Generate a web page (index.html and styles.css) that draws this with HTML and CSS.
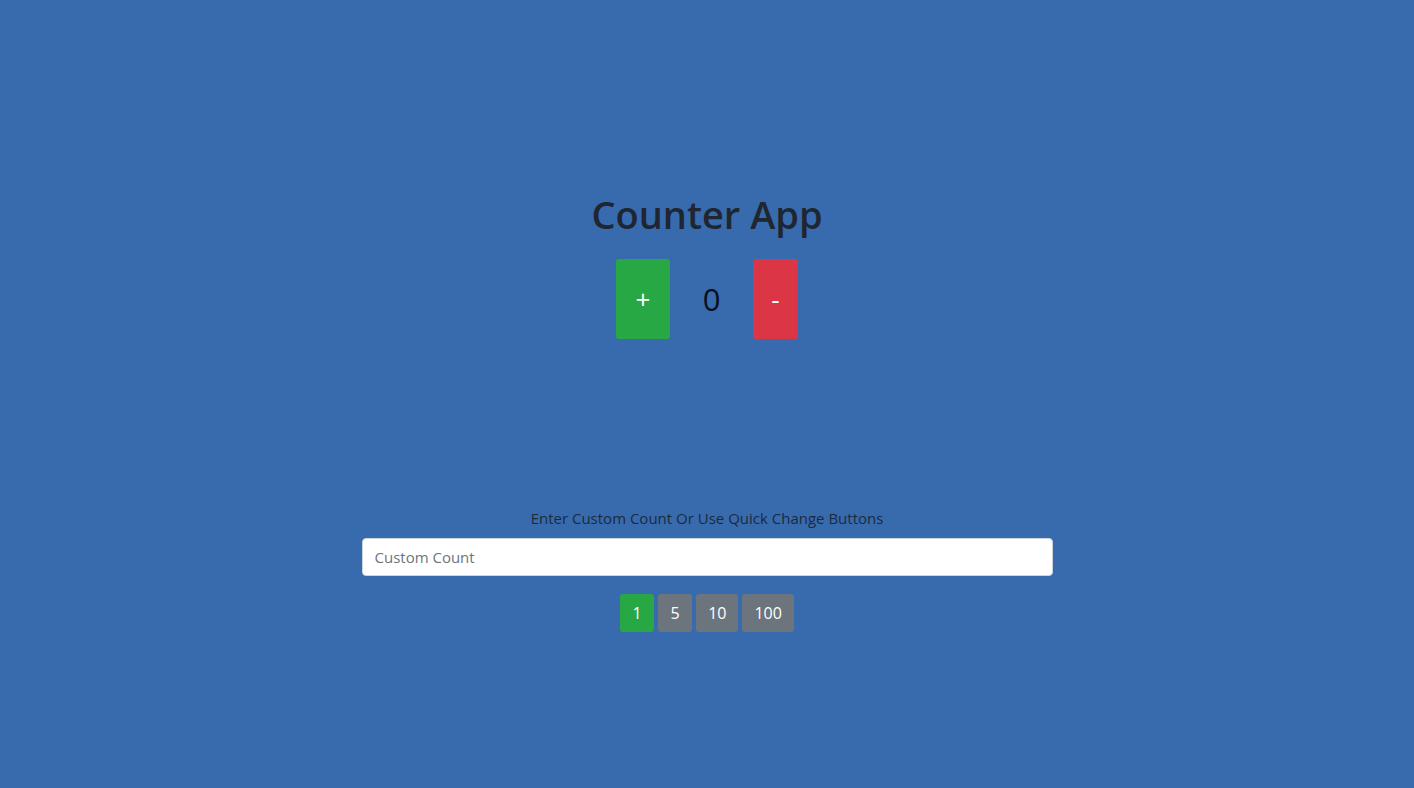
FILE: index.html
```html
<!DOCTYPE html>
<html lang="en">
<head>
<meta charset="utf-8">
<title>Counter App</title>
<link rel="stylesheet" href="styles.css">
</head>
<body>
<main class="app">
  <h1 class="title">Counter App</h1>
  <div class="counter">
    <button class="btn-big btn-plus">+</button>
    <span class="count">0</span>
    <button class="btn-big btn-minus">-</button>
  </div>
  <div class="custom">
    <label class="label" for="custom">Enter Custom Count Or Use Quick Change Buttons</label>
    <input id="custom" class="input" type="text" placeholder="Custom Count">
    <div class="quick">
      <button class="btn-q active">1</button>
      <button class="btn-q">5</button>
      <button class="btn-q">10</button>
      <button class="btn-q">100</button>
    </div>
  </div>
</main>
</body>
</html>
```

FILE: styles.css
```css
html, body {
  margin: 0;
  padding: 0;
  height: 100%;
}
body {
  background: #376bae;
  font-family: "Open Sans", "Noto Sans", sans-serif;
  color: #212529;
}
.app {
  display: flex;
  flex-direction: column;
  align-items: center;
  padding-top: 188px;
}
.title {
  margin: 0;
  font-size: 38px;
  font-weight: 600;
  line-height: 52px;
  color: #1f2630;
}
.counter {
  display: flex;
  align-items: center;
  margin-top: 19px;
}
.btn-big {
  height: 80px;
  border: none;
  border-radius: 3px;
  color: #fff;
  font-family: inherit;
  font-size: 26px;
  padding: 0;
  cursor: pointer;
}
.btn-plus {
  width: 54px;
  background: #28a745;
}
.btn-minus {
  width: 45px;
  background: #dc3545;
}
.count {
  width: 83px;
  text-align: center;
  font-size: 31px;
  color: #0a0f1a;
}
.custom {
  display: flex;
  flex-direction: column;
  align-items: center;
  margin-top: 167px;
  width: 691px;
}
.label {
  font-size: 15px;
  line-height: 24px;
  color: #1c2a3d;
  margin-bottom: 8px;
}
.input {
  box-sizing: border-box;
  width: 100%;
  height: 38px;
  border: 1px solid #ced4da;
  border-radius: 4px;
  padding: 6px 12px;
  font-family: inherit;
  font-size: 15px;
  color: #495057;
  background: #fff;
}
.input::placeholder {
  color: #6c757d;
}
.quick {
  display: flex;
  gap: 4px;
  margin-top: 18px;
}
.btn-q {
  height: 38px;
  min-width: 34px;
  padding: 0 12px;
  border: none;
  border-radius: 3px;
  background: #6c757d;
  color: #fff;
  font-family: inherit;
  font-size: 16px;
  cursor: pointer;
}
.btn-q.active {
  background: #28a745;
}
```
